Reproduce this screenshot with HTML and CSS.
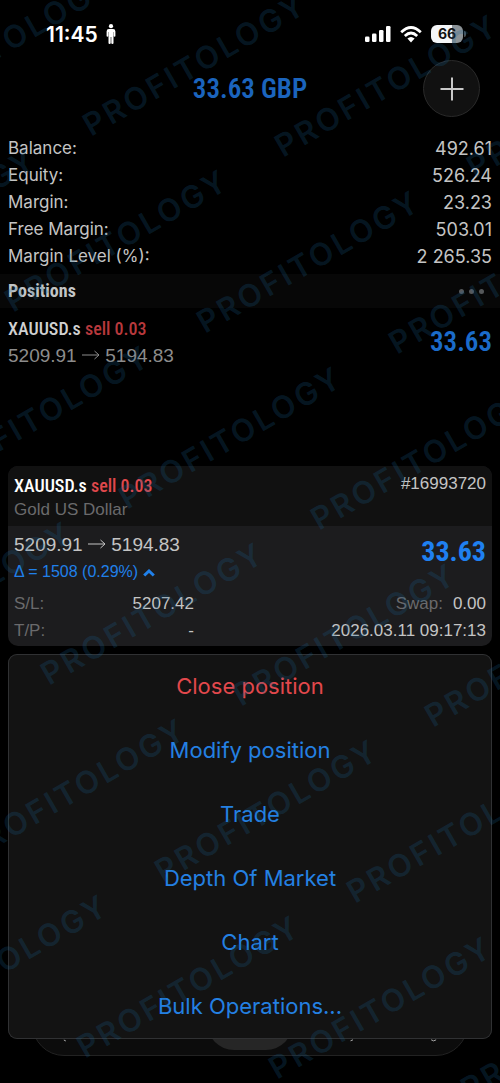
FILE: index.html
```html
<!DOCTYPE html>
<html lang="en">
<head>
<meta charset="utf-8">
<meta name="viewport" content="width=device-width, initial-scale=1">
<title>Trade</title>
<link rel="stylesheet" href="styles.css">
</head>
<body>
<div class="screen">
  <header class="status">
    <div class="status-group status-time">
      <span>11:45</span>
      <svg class="person" viewBox="0 0 10 20" width="10" height="20" aria-hidden="true"><circle cx="5" cy="2.200" r="2.100"/><path d="M3 5h4q2.400 0 2.400 2.400V12q0 .8-.8.8T7.800 12V8h-.3v11q0 .9-1.100.9T5.300 19v-6h-.6v6q0 .9-1.100.9T2.500 19V8h-.3v4q0 .8-.8.8T.6 12V7.400Q.6 5 3 5z"/></svg>
    </div>
    <div class="status-group">
      <svg viewBox="0 0 26 16" width="26" height="16" aria-hidden="true"><rect x="0" y="10.500" width="4.500" height="5.500" rx="1.300"/><rect x="7" y="7.500" width="4.500" height="8.500" rx="1.300"/><rect x="14" y="4" width="4.500" height="12" rx="1.300"/><rect x="21" y="0" width="4.500" height="16" rx="1.300"/></svg>
      <svg viewBox="0 0 22 17" width="22" height="17" aria-hidden="true"><g fill="none" stroke="#fff" stroke-width="2.700"><path d="M1.200 6.200Q11-3.200 20.800 6.200"/><path d="M4.800 10Q11 4 17.200 10"/></g><path d="M7.400 12.500Q11 9.300 14.600 12.500L11 16.500z"/></svg>
      <div class="battery"><span class="battery-level">66</span><span class="battery-cap"></span></div>
    </div>
  </header>

  <div class="topbar">
    <h1 class="total">33.63 GBP</h1>
    <button class="add" type="button" aria-label="New order"><svg viewBox="0 0 24 24" width="24" height="24" aria-hidden="true"><path d="M12 0.500v23M0.500 12h23"/></svg></button>
  </div>

  <dl class="summary">
    <div class="row"><dt>Balance:</dt><dd>492.61</dd></div>
    <div class="row"><dt>Equity:</dt><dd>526.24</dd></div>
    <div class="row"><dt>Margin:</dt><dd>23.23</dd></div>
    <div class="row"><dt>Free Margin:</dt><dd>503.01</dd></div>
    <div class="row"><dt>Margin Level (%):</dt><dd>2 265.35</dd></div>
  </dl>

  <div class="section">
    <h2>Positions</h2>
    <button class="more" type="button" aria-label="More"><i></i><i></i><i></i></button>
  </div>

  <div class="position">
    <div>
      <div class="symbol">XAUUSD.s <span class="sell">sell 0.03</span></div>
      <div class="prices">5209.91 <svg class="arrow" viewBox="0 0 18 10" width="18" height="10" aria-hidden="true"><path d="M0 5h17M12.500 1l4.500 4-4.500 4"/></svg> 5194.83</div>
    </div>
    <div class="profit">33.63</div>
  </div>

  <section class="card">
    <div class="card-head">
      <div>
        <div class="symbol">XAUUSD.s <span class="sell">sell 0.03</span></div>
        <div class="name">Gold US Dollar</div>
      </div>
      <div class="ticket">#16993720</div>
    </div>
    <div class="card-body">
      <div class="card-main">
        <div>
          <div class="prices">5209.91 <svg class="arrow" viewBox="0 0 18 10" width="18" height="10" aria-hidden="true"><path d="M0 5h17M12.500 1l4.500 4-4.500 4"/></svg> 5194.83</div>
          <div class="delta">Δ = 1508 (0.29%) <svg class="caret" viewBox="0 0 12 8" width="12" height="8" aria-hidden="true"><path d="M1.200 6.500L6 2l4.800 4.500"/></svg></div>
        </div>
        <div class="profit">33.63</div>
      </div>
      <dl class="details">
        <div class="pair"><dt>S/L:</dt><dd>5207.42</dd></div>
        <div class="pair end"><dt>Swap:</dt><dd>0.00</dd></div>
        <div class="pair"><dt>T/P:</dt><dd>-</dd></div>
        <div class="pair end"><dd>2026.03.11 09:17:13</dd></div>
      </dl>
    </div>
  </section>

  <div class="sheet">
    <div class="tabbar">
      <span class="tab-active"></span>
      <svg class="tab-marks" viewBox="0 0 436 4" aria-hidden="true"><path d="M31 1l2 1M319 1.800l2.500-1M400 .8q2.500 2.200 5 0"/></svg>
    </div>
    <nav class="menu">
      <button type="button" class="danger">Close position</button>
      <button type="button">Modify position</button>
      <button type="button">Trade</button>
      <button type="button">Depth Of Market</button>
      <button type="button">Chart</button>
      <button type="button">Bulk Operations...</button>
    </nav>
  </div>

  <svg class="watermark" aria-hidden="true">
    <defs><text id="mark" transform="rotate(-30)">PROFITOLOGY</text></defs>
    <use href="#mark" x="-101" y="116"/><use href="#mark" x="91" y="137"/><use href="#mark" x="283" y="158"/><use href="#mark" x="475" y="179"/>
    <use href="#mark" x="-179" y="292"/><use href="#mark" x="13" y="313"/><use href="#mark" x="205" y="334"/><use href="#mark" x="397" y="355"/>
    <use href="#mark" x="-65" y="489"/><use href="#mark" x="127" y="510"/><use href="#mark" x="319" y="531"/>
    <use href="#mark" x="-143" y="665"/><use href="#mark" x="49" y="686"/><use href="#mark" x="241" y="707"/><use href="#mark" x="433" y="728"/>
    <use href="#mark" x="-221" y="841"/><use href="#mark" x="-29" y="862"/><use href="#mark" x="163" y="883"/><use href="#mark" x="355" y="904"/>
    <use href="#mark" x="-107" y="1038"/><use href="#mark" x="85" y="1059"/><use href="#mark" x="277" y="1080"/><use href="#mark" x="469" y="1101"/>
  </svg>
</div>
</body>
</html>
```
FILE: styles.css
```css
* { box-sizing: border-box; }
body { margin: 0; background: #000; color: #c4c4c4; font-family: Inter, "Liberation Sans", sans-serif; }
h1, h2, dl, dd { margin: 0; }
button { border: 0; padding: 0; background: none; font: inherit; cursor: pointer; }
.screen { position: relative; min-height: 100vh; overflow: hidden; display: flex; flex-direction: column; }

.status { display: flex; justify-content: space-between; align-items: center; height: 60px; padding: 8px 34px 0 46px; }
.status svg { fill: #fff; }
.status-group { display: flex; align-items: center; gap: 9px; }
.status-time { gap: 8px; color: #fff; font-size: 21px; font-weight: 600; }
.battery { display: flex; align-items: center; gap: 1px; }
.battery-level { width: 32px; height: 18px; border-radius: 6px; background: linear-gradient(90deg, #f4f6f8 66%, #8b9297 66%); color: #111; font-size: 14px; line-height: 18px; font-weight: 700; text-align: center; }
.battery-cap { width: 2px; height: 6px; border-radius: 0 2px 2px 0; background: #4a5054; }

.topbar { display: grid; grid-template-columns: 1fr auto 1fr; align-items: center; height: 57px; padding: 0 20px; }
.total { grid-column: 2; color: #1b64bd; font: 600 27px/32px "Roboto Condensed", Roboto, sans-serif; }
.add { justify-self: end; width: 57px; height: 57px; border: 1px solid #2a2a2a; border-radius: 50%; background: #111; display: grid; place-items: center; }
.add path { stroke: #c8c8c8; stroke-width: 2; }

.summary { padding: 18px 8px 4px; font-size: 17px; line-height: 27px; }
.row { display: flex; justify-content: space-between; }
.row dd { font-size: 18px; }

.section { display: flex; justify-content: space-between; align-items: center; height: 34px; padding: 0 16px 0 8px; background: #070707; }
.section h2 { color: #c2c5c6; font: 700 18px/34px "Roboto Condensed", Roboto, sans-serif; }
.more { display: flex; gap: 5px; }
.more i { width: 5px; height: 5px; border-radius: 50%; background: #55585a; }

.position { display: flex; justify-content: space-between; align-items: center; padding: 7px 8px 0; }
.symbol { color: #d0d0d0; font: 500 18px/27px "Roboto Condensed", Roboto, sans-serif; }
.sell { color: #b8393d; }
.prices { color: #8c8c8c; font: 19px/27px "Liberation Sans", Arial, sans-serif; }
.arrow, .caret { fill: none; stroke: currentColor; stroke-width: 1; vertical-align: 2px; }
.profit { color: #1b6bca; font: 600 27px/32px "Roboto Condensed", Roboto, sans-serif; }

.card { margin: 97px 8px 8px; border-radius: 10px; overflow: hidden; background: #1c1c1e; font: 17px/27px "Liberation Sans", Arial, sans-serif; }
.card-head { display: flex; justify-content: space-between; height: 60px; padding: 6px 6px 0; background: #111; }
.card .symbol { color: #fff; }
.card .sell { color: #e0484c; }
.name { color: #6a6a6c; line-height: 22px; }
.ticket { line-height: 24px; }
.card-body { padding: 5px 6px 2px; }
.card-main { display: flex; justify-content: space-between; align-items: flex-start; padding-bottom: 5px; }
.card .prices { color: #c4c4c4; }
.card .profit { padding-top: 5px; color: #1f80f0; font-size: 28px; font-weight: 700; }
.delta { color: #2080ea; font-size: 16px; }
.caret { stroke-width: 3; vertical-align: 0; }
.details { display: grid; grid-template-columns: 180px 1fr; }
.pair { display: flex; justify-content: space-between; }
.end { justify-content: flex-end; gap: 10px; }
.details dt { color: #6a6a6c; }

.sheet { position: relative; margin: 0 8px 44px; }
.menu { position: relative; display: flex; flex-direction: column; padding-bottom: 1px; border-radius: 9px; background: #131313; box-shadow: inset 0 0 0 1px #303133; }
.menu button { height: 64px; color: #2480e2; font-size: 22px; }
.menu .danger { color: #e2484c; }
.tabbar { position: absolute; left: 24px; right: 24px; bottom: -17px; height: 64px; border: 1px solid #222; border-radius: 32px; background: #0c0c0c; }
.tab-active { position: absolute; left: 40%; width: 20%; bottom: 5px; height: 54px; border-radius: 27px; background: #262626; }
.tab-marks { position: absolute; left: 0; bottom: 12px; width: 100%; height: 4px; fill: none; stroke: #aaa; }

.watermark { position: absolute; inset: 0; width: 100%; height: 100%; pointer-events: none; }
#mark { fill: #1a6496; fill-opacity: .23; font: 600 31px Inter, sans-serif; letter-spacing: 3px; }
```
